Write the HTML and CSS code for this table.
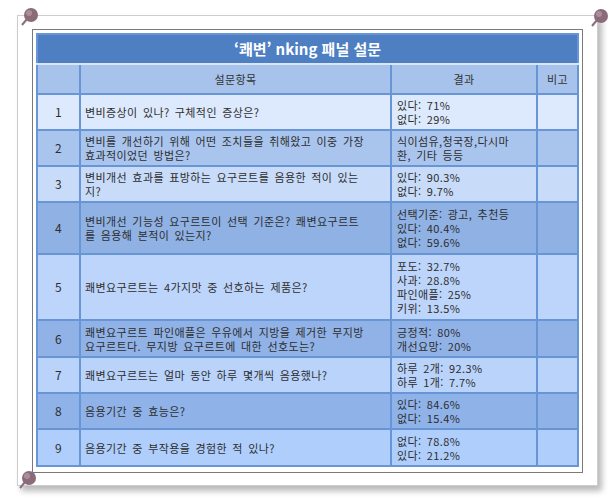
FILE: index.html
```html
<!DOCTYPE html>
<html lang="ko">
<head>
<meta charset="utf-8">
<link rel="stylesheet" href="styles.css">
</head>
<body>
<div class="paper">
  <div class="frame">
    <table class="survey">
      <colgroup>
        <col class="c-no"><col class="c-q"><col class="c-r"><col class="c-n">
      </colgroup>
      <tr class="title"><th colspan="4">‘쾌변’ nking 패널 설문</th></tr>
      <tr class="head"><th></th><th>설문항목</th><th>결과</th><th>비고</th></tr>
      <tr class="r1"><td class="no">1</td><td class="q">변비증상이 있나? 구체적인 증상은?</td><td class="res">있다: 71%<br>없다: 29%</td><td></td></tr>
      <tr class="r2"><td class="no">2</td><td class="q">변비를 개선하기 위해 어떤 조치들을 취해왔고 이중 가장<br>효과적이었던 방법은?</td><td class="res">식이섬유,청국장,다시마<br>환, 기타 등등</td><td></td></tr>
      <tr class="r3"><td class="no">3</td><td class="q">변비개선 효과를 표방하는 요구르트를 음용한 적이 있는<br>지?</td><td class="res">있다: 90.3%<br>없다: 9.7%</td><td></td></tr>
      <tr class="r4"><td class="no">4</td><td class="q">변비개선 기능성 요구르트이 선택 기준은? 쾌변요구르트<br>를 음용해 본적이 있는지?</td><td class="res">선택기준: 광고, 추천등<br>있다: 40.4%<br>없다: 59.6%</td><td></td></tr>
      <tr class="r5"><td class="no">5</td><td class="q">쾌변요구르트는 4가지맛 중 선호하는 제품은?</td><td class="res">포도: 32.7%<br>사과: 28.8%<br>파인애플: 25%<br>키위: 13.5%</td><td></td></tr>
      <tr class="r6"><td class="no">6</td><td class="q">쾌변요구르트 파인애플은 우유에서 지방을 제거한 무지방<br>요구르트다. 무지방 요구르트에 대한 선호도는?</td><td class="res">긍정적: 80%<br>개선요망: 20%</td><td></td></tr>
      <tr class="r7"><td class="no">7</td><td class="q">쾌변요구르트는 얼마 동안 하루 몇개씩 음용했나?</td><td class="res">하루 2개: 92.3%<br>하루 1개: 7.7%</td><td></td></tr>
      <tr class="r8"><td class="no">8</td><td class="q">음용기간 중 효능은?</td><td class="res">있다: 84.6%<br>없다: 15.4%</td><td></td></tr>
      <tr class="r9"><td class="no">9</td><td class="q">음용기간 중 부작용을 경험한 적 있나?</td><td class="res">없다: 78.8%<br>있다: 21.2%</td><td></td></tr>
    </table>
  </div>
</div>
<svg class="pin pin-tl" width="20" height="20" viewBox="0 0 20 20"><path d="M2 18 L7 12" stroke="#8a6f7c" stroke-width="2"/><circle cx="11" cy="8" r="7" fill="#8b6b79"/><circle cx="9" cy="6" r="3" fill="#a98e9a"/></svg>
<svg class="pin pin-tr" width="20" height="20" viewBox="0 0 20 20"><path d="M2 18 L7 12" stroke="#8a6f7c" stroke-width="2"/><circle cx="11" cy="8" r="7" fill="#8b6b79"/><circle cx="9" cy="6" r="3" fill="#a98e9a"/></svg>
<svg class="pin pin-bl" width="20" height="20" viewBox="0 0 20 20"><path d="M2 18 L7 12" stroke="#8a6f7c" stroke-width="2"/><circle cx="11" cy="8" r="7" fill="#8b6b79"/><circle cx="9" cy="6" r="3" fill="#a98e9a"/></svg>
</body>
</html>
```
FILE: styles.css
```css
html, body {
  margin: 0;
  padding: 0;
  background: #ffffff;
}
body {
  position: relative;
  width: 616px;
  height: 503px;
  overflow: hidden;
  font-family: "Noto Sans CJK KR", "Noto Sans", sans-serif;
}
.paper {
  margin: 15px 0 0 17px;
  width: 551px;
  height: 443px;
  padding: 13px 14px;
  border: 1px solid #cdcdcd;
  background: #fff;
  box-shadow: 4px 5px 6px rgba(0, 0, 0, 0.28);
}
.frame {
  width: 543px;
  height: 436px;
  padding: 3px 3px;
  border: 1px solid #7a7a7a;
}
.survey {
  width: 541px;
  border-collapse: collapse;
  table-layout: fixed;
  border: 2px solid #5a89cc;
  color: #2e2e2e;
  font-size: 11px;
  line-height: 14px;
  letter-spacing: 0.4px;
  word-spacing: 1.8px;
}
.c-no { width: 43px; }
.c-q { width: 311px; }
.c-r { width: 146px; }
.c-n { width: 41px; }
.survey th,
.survey td {
  border: 2px solid #6895d6;
  padding: 0;
  vertical-align: middle;
  white-space: nowrap;
}
.survey .title th {
  height: 28px;
  background: #4d7fc2;
  color: #fff;
  font-size: 15px;
  font-weight: bold;
  letter-spacing: 0;
  word-spacing: 0;
  text-align: center;
  border-bottom: 2px solid #d9e6f8;
}
.survey .head th {
  height: 28px;
  background: #a7c3eb;
  font-weight: normal;
  text-align: center;
  color: #333;
}
.survey td.no { text-align: center; font-size: 12px; }
.survey td.q { padding: 0 4px 0 4px; }
.survey td.res { padding: 0 4px 0 5px; }
.r1 td { height: 34px; background: #dde9fc; }
.r2 td { height: 34px; background: #a9c5ee; }
.r3 td { height: 34px; background: #c8dbf9; }
.r4 td { height: 50px; background: #8fb1e4; }
.r5 td { height: 64px; background: #bdd5fa; }
.r6 td { height: 35px; background: #90b2e7; }
.r7 td { height: 34px; background: #bad3fb; }
.r8 td { height: 34px; background: #8fb2e9; }
.r9 td { height: 35px; background: #afcefc; }
.pin {
  position: absolute;
}
.pin-tl { left: 20px; top: 7px; }
.pin-tr { left: 590px; top: 8px; }
.pin-bl { left: 18px; top: 470px; }
```
